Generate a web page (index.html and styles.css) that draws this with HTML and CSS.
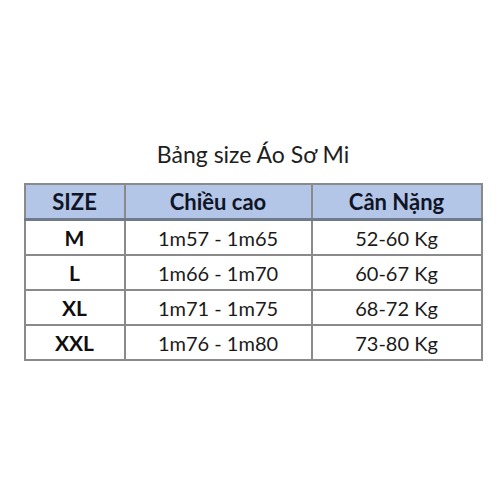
FILE: index.html
```html
<!DOCTYPE html>
<html lang="vi">
<head>
<meta charset="utf-8">
<link rel="stylesheet" href="styles.css">
</head>
<body>
<div class="page">
  <div class="title">Bảng size Áo Sơ Mi</div>
  <table class="size-table">
    <thead>
      <tr><th class="c1">SIZE</th><th class="c2">Chiều cao</th><th class="c3">Cân Nặng</th></tr>
    </thead>
    <tbody>
      <tr><td class="sz">M</td><td>1m57 - 1m65</td><td>52-60 Kg</td></tr>
      <tr><td class="sz">L</td><td>1m66 - 1m70</td><td>60-67 Kg</td></tr>
      <tr><td class="sz">XL</td><td>1m71 - 1m75</td><td>68-72 Kg</td></tr>
      <tr><td class="sz">XXL</td><td>1m76 - 1m80</td><td>73-80 Kg</td></tr>
    </tbody>
  </table>
</div>
</body>
</html>
```
FILE: styles.css
```css
html, body {
  margin: 0;
  padding: 0;
  background: #ffffff;
}
.page {
  width: 500px;
  height: 500px;
  box-sizing: border-box;
  padding-top: 139px;
  padding-left: 6px;
  display: flex;
  flex-direction: column;
  align-items: center;
  font-family: "Lato", "Liberation Sans", sans-serif;
  color: #1f1f1f;
}
.title {
  font-size: 23px;
  line-height: 30px;
  color: #1e1e1e;
  margin-bottom: 14px;
}
.size-table {
  border-collapse: collapse;
  width: 451px;
  table-layout: fixed;
}
.size-table th, .size-table td {
  border: 2px solid #8a8a8a;
  text-align: center;
  padding: 0;
  height: 33px;
  font-size: 20px;
}
.size-table th {
  background: #b4c6e7;
  font-weight: 700;
  font-size: 22px;
  color: #0f1426;
  height: 33px;
}
.size-table thead tr th {
  border-bottom: 3px solid #6f7a8c;
}
.size-table td {
  color: #1a1a1a;
}
.size-table td.sz {
  font-weight: 700;
  font-size: 21px;
  color: #0f0f0f;
}
.c1 { width: 98px; }
.c2 { width: 185px; }
.c3 { width: 168px; }
```
